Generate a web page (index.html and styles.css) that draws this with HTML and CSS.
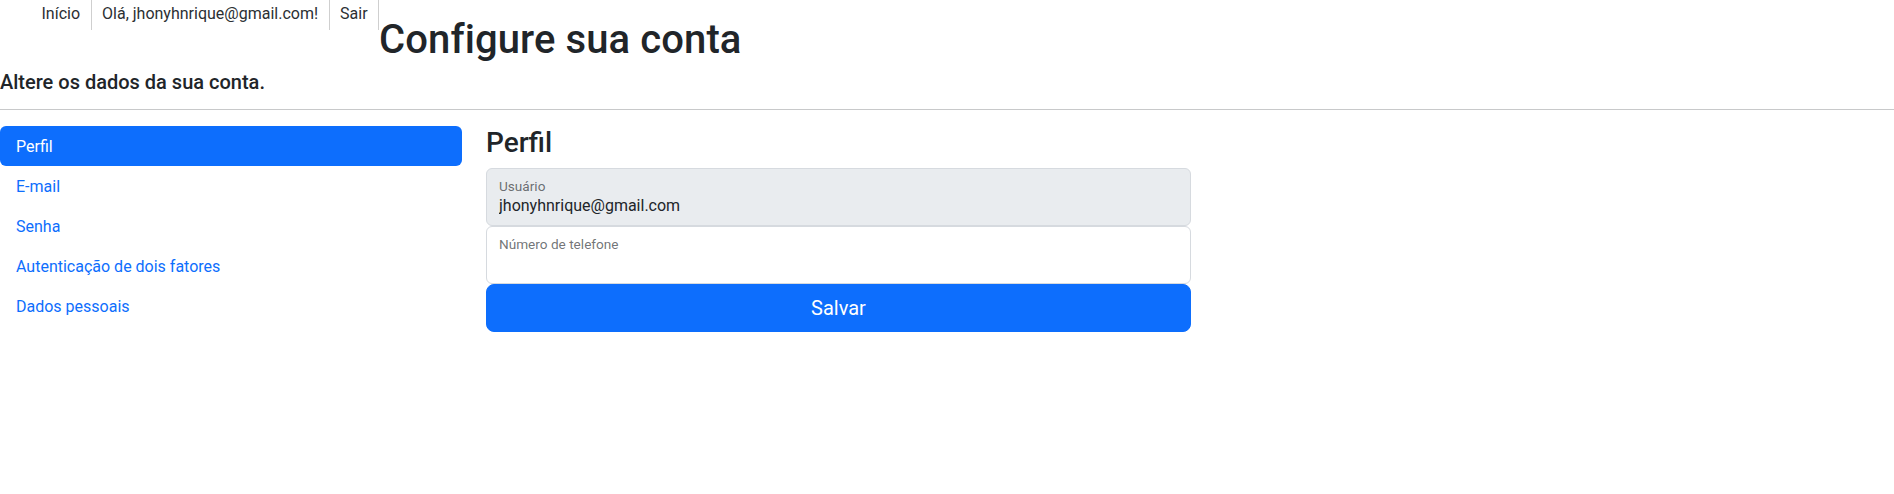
FILE: index.html
```html
<!DOCTYPE html>
<html lang="pt-BR">
<head>
<meta charset="utf-8">
<title>Configure sua conta</title>
<link rel="stylesheet" href="styles.css">
</head>
<body>
<header class="top">
  <ul class="topnav">
    <li class="topnav-item"><a class="topnav-link" href="#">Início</a></li>
    <li class="topnav-item"><a class="topnav-link" href="#">Olá, jhonyhnrique@gmail.com!</a></li>
    <li class="topnav-item"><a class="topnav-link" href="#">Sair</a></li>
  </ul>
  <h1 class="page-title">Configure sua conta</h1>
</header>
<h2 class="subtitle">Altere os dados da sua conta.</h2>
<hr class="divider">
<div class="manage">
  <nav class="side">
    <a class="side-link active" href="#">Perfil</a>
    <a class="side-link" href="#">E-mail</a>
    <a class="side-link" href="#">Senha</a>
    <a class="side-link" href="#">Autenticação de dois fatores</a>
    <a class="side-link" href="#">Dados pessoais</a>
  </nav>
  <section class="profile">
    <h3 class="profile-title">Perfil</h3>
    <form class="profile-form">
      <div class="field field-disabled">
        <label class="field-label" for="user">Usuário</label>
        <input class="field-input" id="user" type="text" value="jhonyhnrique@gmail.com" readonly>
      </div>
      <div class="field">
        <label class="field-label" for="phone">Número de telefone</label>
        <input class="field-input" id="phone" type="text">
      </div>
      <button class="btn-save" type="button">Salvar</button>
    </form>
  </section>
</div>
</body>
</html>
```

FILE: styles.css
```css
html, body {
  margin: 0;
  padding: 0;
  background: #ffffff;
}

body {
  font-family: Roboto, "Liberation Sans", sans-serif;
  font-size: 16px;
  line-height: 1.5;
  color: #212529;
}

a {
  text-decoration: none;
}

.top {
  display: flex;
  align-items: flex-start;
}

.topnav {
  display: flex;
  list-style: none;
  margin: 0;
  padding: 0 0 0 31px;
}

.topnav-item {
  height: 30px;
}

.topnav-item + .topnav-item {
  border-left: 1px solid #cfcfcf;
}

.topnav-item:last-child {
  border-right: 1px solid #cfcfcf;
}

.topnav-link {
  display: block;
  padding: 2px 10.5px 4px;
  line-height: 24px;
  color: #2b2f33;
}

.page-title {
  margin: 16px 0 6px;
  font-size: 40px;
  font-weight: 500;
  line-height: 1.2;
  letter-spacing: 0.1px;
}

.subtitle {
  margin: 0;
  font-size: 20px;
  font-weight: 500;
  line-height: 1.2;
}

.divider {
  margin: 15px 0 16px;
  border: 0;
  border-top: 1px solid #c8c9ca;
  height: 0;
}

.manage {
  display: grid;
  grid-template-columns: 462px 705px;
  column-gap: 24px;
  align-items: start;
}

.side {
  display: flex;
  flex-direction: column;
}

.side-link {
  display: block;
  padding: 9px 16px 7px;
  line-height: 24px;
  color: #0d6efd;
  border-radius: 6px;
}

.side-link.active {
  background: #0d6efd;
  color: #ffffff;
}

.profile-title {
  margin: 0 0 8px;
  font-size: 28px;
  font-weight: 500;
  line-height: 1.2;
}

.profile-form {
  display: flex;
  flex-direction: column;
}

.field {
  display: flex;
  flex-direction: column;
  box-sizing: border-box;
  height: 58px;
  padding: 10px 12px 0;
  border: 1px solid #d6dadf;
  border-radius: 6px;
  background: #ffffff;
}

.field-disabled {
  background: #e9ecef;
}

.field-label {
  font-size: 13.6px;
  line-height: 14px;
  color: rgba(33, 37, 41, 0.65);
}

.field-input {
  height: 22px;
  margin: 2px 0 0;
  padding: 0;
  border: 0;
  outline: none;
  background: transparent;
  font-family: inherit;
  font-size: 16px;
  color: #212529;
}

.btn-save {
  height: 48px;
  padding: 8px 16px;
  border: 1px solid #0d6efd;
  border-radius: 8px;
  background: #0d6efd;
  color: #ffffff;
  font-family: inherit;
  font-size: 20px;
  line-height: 30px;
}
```
